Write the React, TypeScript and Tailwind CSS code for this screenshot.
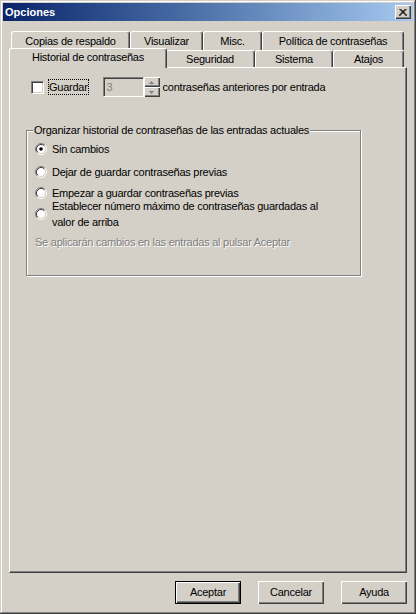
import React from "react";

const raised =
  "shadow-[inset_1px_1px_#ffffff,inset_-1px_-1px_#404040,inset_-2px_-2px_#808080]";
const sunken =
  "border-t border-l border-t-[#808080] border-l-[#808080] border-b border-r border-b-white border-r-white shadow-[inset_1px_1px_#404040,inset_-1px_-1px_#d4d0c8]";

function Radio({ checked }: { checked?: boolean }) {
  return (
    <svg width="12" height="12" viewBox="0 0 12 12" className="shrink-0">
      <circle cx="6" cy="6" r="4.2" fill="#ffffff" />
      <path d="M2.11 9.89 A5.5 5.5 0 0 1 9.89 2.11" fill="none" stroke="#808080" strokeWidth="1" />
      <path d="M9.89 2.11 A5.5 5.5 0 0 1 2.11 9.89" fill="none" stroke="#ffffff" strokeWidth="1" />
      <path d="M2.82 9.18 A4.5 4.5 0 0 1 9.18 2.82" fill="none" stroke="#404040" strokeWidth="1" />
      <path d="M9.18 2.82 A4.5 4.5 0 0 1 2.82 9.18" fill="none" stroke="#d4d0c8" strokeWidth="1" />
      {checked && <circle cx="6" cy="6" r="1.8" fill="#000000" />}
    </svg>
  );
}

function Tab({ label, w, selected }: { label: string; w: string; selected?: boolean }) {
  return (
    <div
      className={
        "flex items-center justify-center border-l border-t border-white border-r border-r-[#404040] rounded-tl-[3px] rounded-tr-[3px] shadow-[inset_-1px_0_#808080] bg-[#d4d0c8] " +
        w +
        (selected ? " h-[20px] -mt-[2px] -ml-[2px] -mr-[2px] relative z-10 pb-[3px]" : " h-full")
      }
    >
      <span className="whitespace-nowrap">{label}</span>
    </div>
  );
}

function Button({ label, def }: { label: string; def?: boolean }) {
  return (
    <div
      className={
        "w-[66px] h-[23px] flex items-center justify-center bg-[#d4d0c8] " +
        (def
          ? "shadow-[inset_0_0_0_1px_#000000,inset_2px_2px_#ffffff,inset_-2px_-2px_#404040,inset_-3px_-3px_#808080]"
          : raised)
      }
    >
      {label}
    </div>
  );
}

export default function App() {
  return (
    <div className="w-[416px] h-[614px] bg-[#d4d0c8] p-[3px] flex flex-col text-black text-[11px] leading-[13px] tracking-[-0.25px] font-[family-name:'Liberation_Sans',Arial,sans-serif] shadow-[inset_-1px_-1px_#404040,inset_1px_1px_#d4d0c8,inset_-2px_-2px_#808080,inset_2px_2px_#ffffff]">
      {/* Title bar */}
      <div className="h-[18px] flex items-center bg-linear-to-r from-[#0a246a] to-[#a6caf0] pl-[2px] pr-[2px]">
        <span className="text-white font-bold tracking-normal flex-1">Opciones</span>
        <div className={"w-[16px] h-[14px] bg-[#d4d0c8] flex items-center justify-center " + raised}>
          <svg width="8" height="7" viewBox="0 0 8 7">
            <path d="M0.5 0 L7.5 7 M1.5 0 L8.5 7 M7.5 0 L0.5 7 M6.5 0 L-0.5 7" stroke="#000" strokeWidth="1" />
          </svg>
        </div>
      </div>

      {/* Body */}
      <div className="flex-1 flex flex-col px-[6px] pt-[10px]">
        {/* Tab rows */}
        <div className="h-[19px] flex pl-[2px]">
          <Tab label="Copias de respaldo" w="w-[119px]" />
          <Tab label="Visualizar" w="w-[73px]" />
          <Tab label="Misc." w="w-[59px]" />
          <Tab label="Política de contraseñas" w="w-[142px]" />
        </div>
        <div className="h-[17px] flex items-start pl-[2px]">
          <Tab label="Historial de contraseñas" w="w-[158px]" selected />
          <Tab label="Seguridad" w="w-[90px]" />
          <Tab label="Sistema" w="w-[78px]" />
          <Tab label="Atajos" w="w-[71px]" />
        </div>

        {/* Panel */}
        <div className="flex-1 border-l border-t border-white border-r border-b border-r-[#404040] border-b-[#404040] shadow-[inset_-1px_-1px_#808080] flex flex-col pl-[21px] pt-[9px]">
          <div className="h-[20px] flex items-center">
            <div className={"w-[13px] h-[13px] bg-white " + sunken} />
            <div className="ml-[4px] h-[16px] flex items-center border border-dotted border-black">
              Guardar
            </div>
            <div className={"ml-[14px] w-[41px] h-[20px] flex items-center pl-[3px] text-[#808080] bg-[#d4d0c8] " + sunken}>
              3
            </div>
            <div className="w-[16px] h-[20px] flex flex-col">
              <div className={"h-[10px] flex items-center justify-center " + raised}>
                <svg width="5" height="3" viewBox="0 0 5 3">
                  <path d="M2.5 0 L5 3 L0 3 Z" fill="#808080" />
                </svg>
              </div>
              <div className={"h-[10px] flex items-center justify-center " + raised}>
                <svg width="5" height="3" viewBox="0 0 5 3">
                  <path d="M0 0 L5 0 L2.5 3 Z" fill="#808080" />
                </svg>
              </div>
            </div>
            <span className="ml-[3px]">contraseñas anteriores por entrada</span>
          </div>

          {/* Group box */}
          <div className="relative mt-[33px] -ml-[5px] w-[335px] h-[146px] border border-[#808080] shadow-[1px_1px_#ffffff,inset_1px_1px_#ffffff] flex flex-col pl-[8px]">
            <span className="absolute -top-[7px] left-[6px] px-[1px] bg-[#d4d0c8]">
              Organizar historial de contraseñas de las entradas actuales
            </span>
            <div className="mt-[10px] h-[16px] flex items-center gap-[5px]">
              <Radio checked />
              <span>Sin cambios</span>
            </div>
            <div className="mt-[7px] h-[16px] flex items-center gap-[5px]">
              <Radio />
              <span>Dejar de guardar contraseñas previas</span>
            </div>
            <div className="mt-[5px] h-[16px] flex items-center gap-[5px]">
              <Radio />
              <span>Empezar a guardar contraseñas previas</span>
            </div>
            <div className="-mt-[3px] h-[32px] flex items-center gap-[5px]">
              <Radio />
              <span className="leading-[16px]">
                Establecer número máximo de contraseñas guardadas al
                <br />
                valor de arriba
              </span>
            </div>
            <div className="mt-[4px] h-[16px] flex items-center text-[#808080] [text-shadow:1px_1px_0_#ffffff]">
              Se aplicarán cambios en las entradas al pulsar Aceptar
            </div>
          </div>
        </div>

        {/* Buttons */}
        <div className="h-[38px] flex items-start justify-end gap-[17px] pt-[8px]">
          <Button label="Aceptar" def />
          <Button label="Cancelar" />
          <Button label="Ayuda" />
        </div>
      </div>
    </div>
  );
}
